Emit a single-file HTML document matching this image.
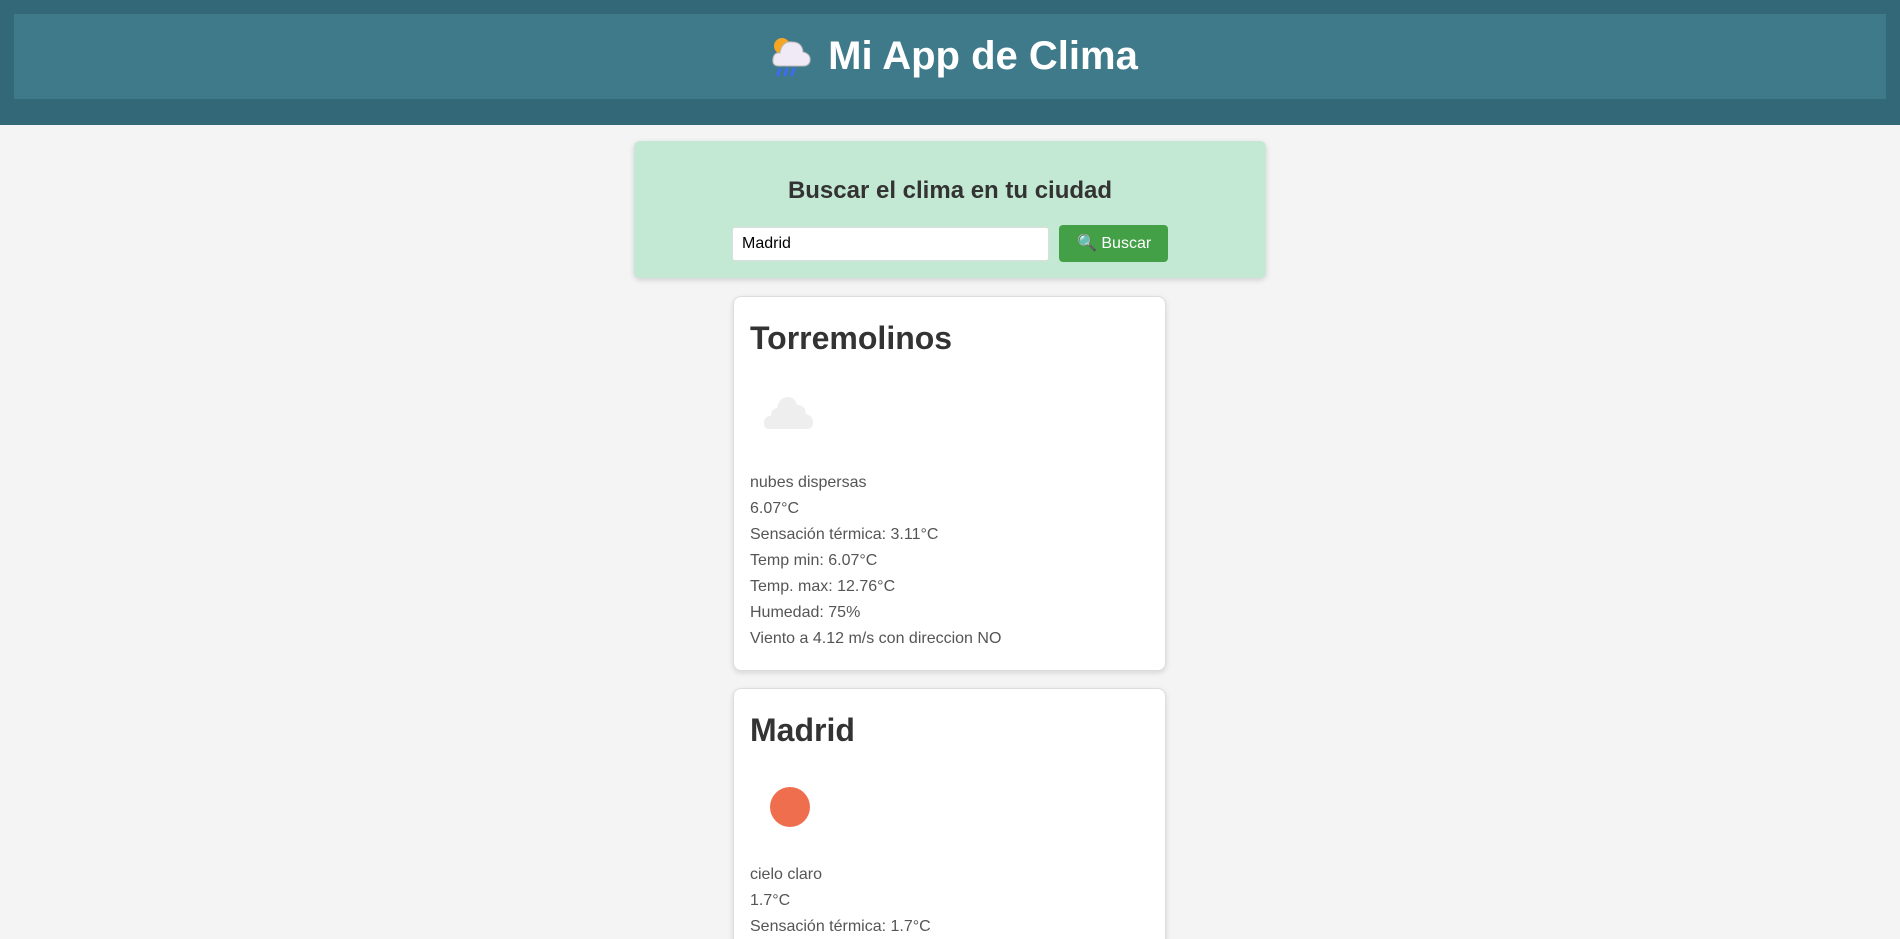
<!DOCTYPE html>
<html><head><meta charset="utf-8"><style>
*{box-sizing:border-box;margin:0;padding:0}
html{width:1900px;height:939px;overflow:hidden}
body{width:1900px;height:939px;overflow:hidden;background:#f4f4f4;font-family:"Liberation Sans",Arial,sans-serif;position:relative}
.hdr{position:absolute;left:0;top:0;width:1900px;height:125px;background:#336879}
.band{position:absolute;left:14px;top:14px;width:1872px;height:85px;background:#3f7a8b}
.title{position:absolute;left:0;top:0;width:100%;height:85px;line-height:85px;text-align:center;color:#fff;font-weight:bold;font-size:40px;padding-left:8px}
.title svg{vertical-align:-8px;margin-right:14px}
.search{position:absolute;left:634px;top:141px;width:632px;height:137px;background:#c3e8d4;border-radius:6px;box-shadow:0 2px 6px rgba(0,0,0,.15)}
.sh{position:absolute;top:36px;left:0;width:100%;text-align:center;font-size:24px;font-weight:bold;color:#333}
.inp{position:absolute;left:98px;top:86px;width:317px;height:34px;background:#fff;border:1px solid #ddd;border-radius:3px;font-size:16px;line-height:32px;padding-left:9px;color:#000}
.btn{position:absolute;left:425px;top:84px;width:109px;height:37px;background:#43a047;border-radius:4px;color:#fff;font-size:16px;line-height:37px;padding-left:18px}
.card{position:absolute;left:733px;width:433px;background:#fff;border:1px solid #ddd;border-radius:8px;box-shadow:0 2px 6px rgba(0,0,0,.12)}
.card h2{position:absolute;left:16px;top:23px;font-size:32px;line-height:37px;color:#333}
.card .ic{position:absolute;left:15px;top:66px;width:100px;height:100px}
.card .tx{position:absolute;left:16px;top:173px;font-size:16px;line-height:26px;color:#555}
</style></head><body>
<div class="hdr"><div class="band"><div class="title"><svg width="44" height="44" viewBox="0 0 44 44"><circle cx="12" cy="13" r="8" fill="#f6a623"/><path d="M9 33 Q2 33 3 26 Q4 19 10 20 Q12 8 22 9 Q32 9 33 19 Q41 21 40 28 Q39 33 33 33 Z" fill="#f0eaf6" stroke="#bbb" stroke-width="1"/><path d="M10 36 l-2 6 M17 36 l-2 6 M24 36 l-2 6" stroke="#3d6cf0" stroke-width="3" stroke-linecap="round"/></svg>Mi App de Clima</div></div></div>
<div class="search"><div class="sh">Buscar el clima en tu ciudad</div><div class="inp">Madrid</div><div class="btn"><span style="color:#2a8ee0">&#128269;</span> Buscar</div></div>
<div class="card" style="top:296px;height:375px"><h2>Torremolinos</h2>
<svg class="ic" viewBox="0 0 100 100"><path d="M20 66 Q15 66 15 60 Q15 53 22 53 Q22 46 28 45 Q30 35 38 34 Q46 34 48 42 Q53 42 56 46 Q57 50 57 51 Q64 53 64 59 Q64 66 58 66 Z" fill="#eeeeee"/></svg>
<div class="tx">nubes dispersas<br>6.07°C<br>Sensación térmica: 3.11°C<br>Temp min: 6.07°C<br>Temp. max: 12.76°C<br>Humedad: 75%<br>Viento a 4.12 m/s con direccion NO</div></div>
<div class="card" style="top:688px;height:270px"><h2>Madrid</h2>
<svg class="ic" viewBox="0 0 100 100"><circle cx="41" cy="52" r="20" fill="#ee6e4d"/></svg>
<div class="tx">cielo claro<br>1.7°C<br>Sensación térmica: 1.7°C</div></div>
</body></html>
